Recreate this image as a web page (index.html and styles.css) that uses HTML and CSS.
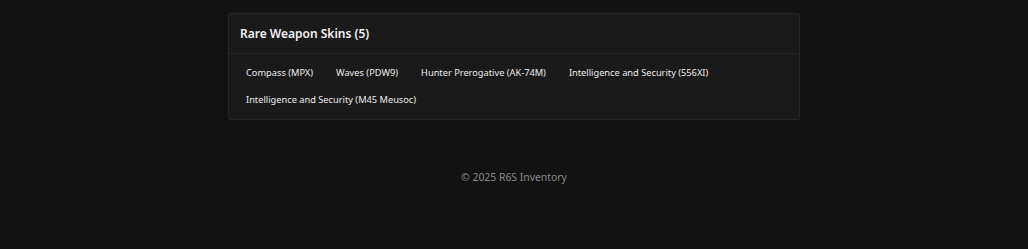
FILE: index.html
```html
<!DOCTYPE html>
<html lang="en">
<head>
    <meta charset="UTF-8">
    <meta name="viewport" content="width=device-width, initial-scale=1.0">
    <title>R6S Inventory</title>
    <link rel="stylesheet" href="styles.css">
</head>
<body>
    <div class="card">
        <div class="card-header">
            <h2>Rare Weapon Skins (5)</h2>
        </div>
        <div class="card-body">
            <span class="skin">Compass (MPX)</span>
            <span class="skin">Waves (PDW9)</span>
            <span class="skin">Hunter Prerogative (AK-74M)</span>
            <span class="skin">Intelligence and Security (556XI)</span>
            <span class="skin">Intelligence and Security (M45 Meusoc)</span>
        </div>
    </div>

    <footer class="footer">
        &copy; 2025 R6S Inventory
    </footer>
</body>
</html>
```

FILE: styles.css
```css
body {
    font-family: "Noto Sans", "DejaVu Sans", sans-serif;
    background-color: #121212;
    color: #e6e6e6;
    margin: 0;
    padding: 13px 0 0;
}
.card {
    background: #1a1a1a;
    border: 1px solid #262626;
    border-radius: 2px;
    width: 570px;
    margin: 0 auto;
}
.card-header {
    padding: 0 11px;
    height: 39px;
    display: flex;
    align-items: center;
    border-bottom: 1px solid #262626;
}
.card-header h2 {
    margin: 0;
    font-size: 12px;
    font-weight: 600;
    color: #f2f2f2;
}
.card-body {
    display: flex;
    flex-wrap: wrap;
    column-gap: 11px;
    row-gap: 7px;
    padding: 9px 11px 9px;
}
.skin {
    font-size: 9.25px;
    padding: 3px 6px;
    line-height: 14px;
    color: #ececec;
}
.footer {
    text-align: center;
    margin-top: 50px;
    font-size: 10.4px;
    color: #8a8a8a;
}
```
